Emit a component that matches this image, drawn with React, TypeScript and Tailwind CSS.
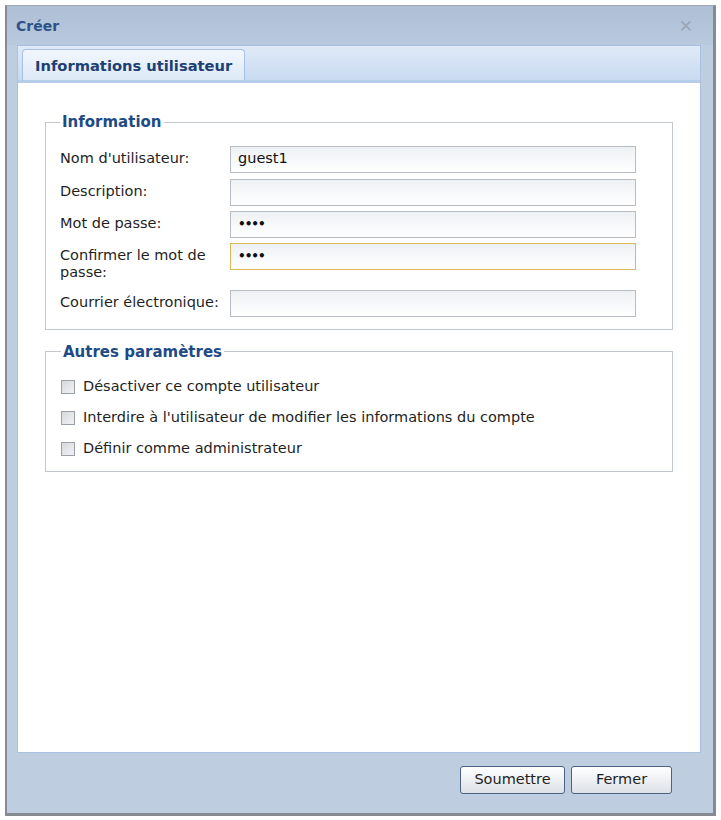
import React from 'react'

const FONT = { fontFamily: '"DejaVu Sans", Verdana, sans-serif' }

const FIELDS = [
  { label: "Nom d'utilisateur:", value: 'guest1', h: 'h-[33px]' },
  { label: 'Description:', value: '', h: 'h-[32px]' },
  { label: 'Mot de passe:', value: '••••', h: 'h-[32px]' },
  { label: 'Confirmer le mot de passe:', value: '••••', h: 'h-[47px]', focus: true },
  { label: 'Courrier électronique:', value: '', h: 'h-[27px]' },
]

const OPTIONS = [
  'Désactiver ce compte utilisateur',
  "Interdire à l'utilisateur de modifier les informations du compte",
  'Définir comme administrateur',
]

function Field({ label, value, focus, h }: { label: string; value: string; focus?: boolean; h: string }) {
  return (
    <div className={`flex items-start ${h}`}>
      <label className="w-[170px] shrink-0 pt-[4px] pr-2 text-[14.5px] leading-[17px] text-[#1f1f1f]">
        {label}
      </label>
      <div
        className={`flex h-[27px] w-[406px] items-center border px-[7px] text-[14.5px] text-[#111] bg-gradient-to-b from-[#eef1f4] to-white ${
          focus ? 'border-[#d9b75a]' : 'border-[#b8bdc4]'
        }`}
      >
        {value.startsWith('•') ? <span className="text-[12px] font-bold tracking-[-1px]">{value}</span> : value}
      </div>
    </div>
  )
}

export default function App() {
  return (
    <div className="h-[820px] w-[721px] bg-white pl-[5px] pt-[5px]" style={FONT}>
      <div className="flex h-[811px] w-[711px] flex-col border-l-[2px] border-r-[3px] border-b-[3px] border-[#868b92] bg-[#bfcde0] border-t border-t-[#a0a8b3]">
        {/* Title bar */}
        <div className="flex h-[39px] shrink-0 items-center justify-between bg-gradient-to-b from-[#aebfd6] to-[#b9c9de] pl-[9px] pr-[20px] pt-[1px]">
          <span className="text-[14px] font-bold text-[#2c5289]">Créer</span>
          <span className="text-[17px] leading-none text-[#9aa7b6]">✕</span>
        </div>

        {/* Panel */}
        <div className="ml-[10px] mr-[12px] flex flex-1 flex-col border border-[#a9c1e0] bg-white">
          <div className="flex h-[37px] shrink-0 items-end border-b-[3px] border-[#b5cdea] bg-gradient-to-b from-[#dfeaf7] to-[#c8dbf1] pl-[4px]">
            <div className="flex h-[31px] items-center rounded-t-[4px] border border-b-0 border-[#a9c1e0] bg-gradient-to-b from-[#f2f7fd] to-[#dde9f7] px-[12px] pt-[2px]">
              <span className="text-[14.7px] font-bold text-[#1e3f73]">Informations utilisateur</span>
            </div>
          </div>

          <div className="flex-1 px-[27px] pt-[28px]">
            <fieldset className="border border-[#c3c8cf] px-[14px] pb-[12px] pt-[12px]">
              <legend className="px-[2px] text-[15px] font-bold text-[#1e4a85]">Information</legend>
              {FIELDS.map(f => (
                <Field key={f.label} {...f} />
              ))}
            </fieldset>

            <fieldset className="mt-[11px] border border-[#c3c8cf] px-[15px] pb-[7px] pt-[8px]">
              <legend className="px-[2px] text-[15px] font-bold text-[#1e4a85]">Autres paramètres</legend>
              {OPTIONS.map(o => (
                <label key={o} className="flex h-[31px] items-center gap-[8px] text-[14.5px] text-[#1f1f1f]">
                  <span className="h-[14px] w-[14px] shrink-0 border border-[#9aa0a8] bg-gradient-to-br from-[#d6d9dd] to-[#f1f2f4]" />
                  {o}
                </label>
              ))}
            </fieldset>
          </div>
        </div>

        {/* Footer */}
        <div className="flex h-[60px] shrink-0 items-start justify-end gap-[6px] pr-[41px] pt-[13px]">
          {['Soumettre', 'Fermer'].map(b => (
            <button
              key={b}
              className="h-[28px] rounded-[3px] border border-[#4b6382] bg-gradient-to-b from-white to-[#dde1e6] text-[14.5px] text-[#1f1f1f] first:w-[105px] last:w-[101px]"
            >
              {b}
            </button>
          ))}
        </div>
      </div>
    </div>
  )
}
